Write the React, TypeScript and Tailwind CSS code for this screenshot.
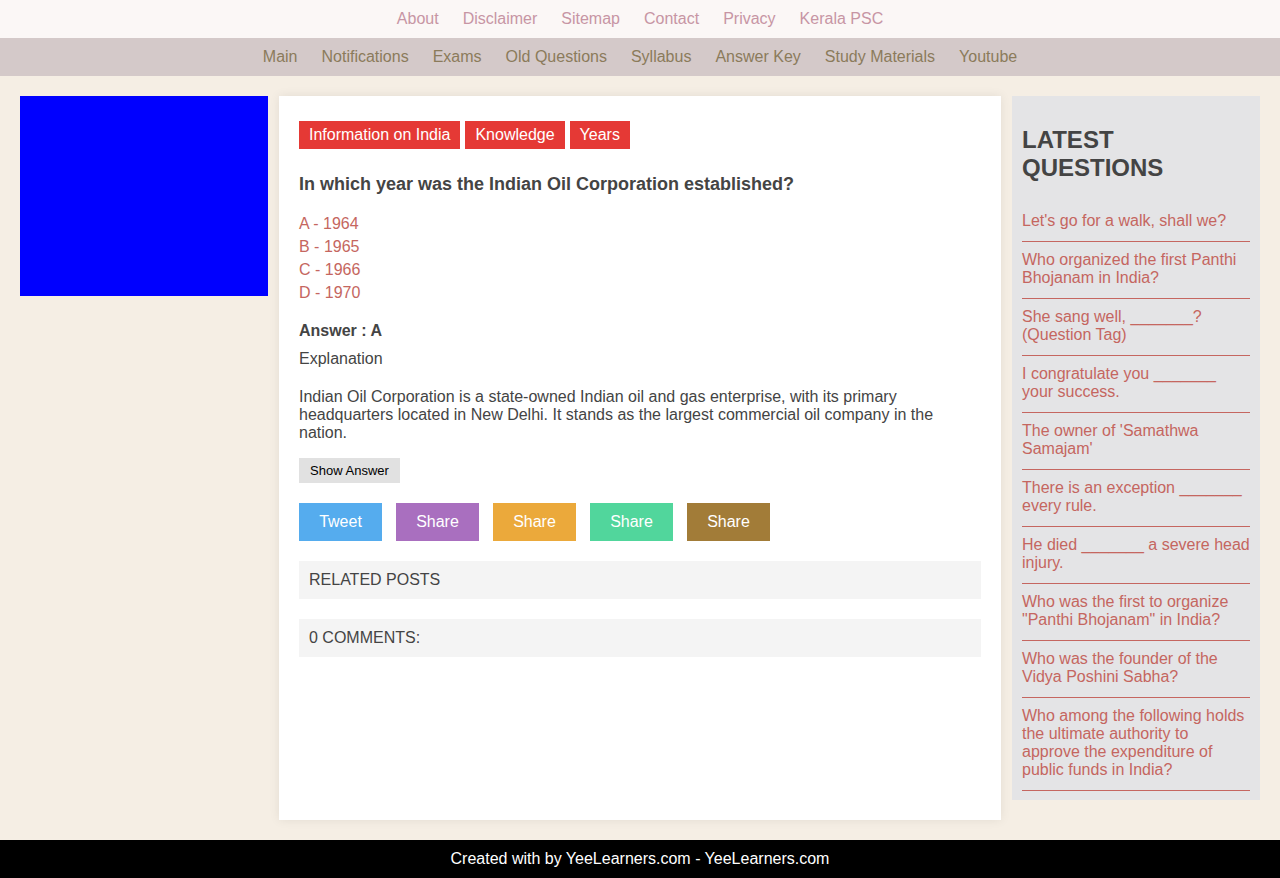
import React from "react";

const topLinks = ["About", "Disclaimer", "Sitemap", "Contact", "Privacy", "Kerala PSC"];
const navLinks = ["Main", "Notifications", "Exams", "Old Questions", "Syllabus", "Answer Key", "Study Materials", "Youtube"];
const latest = [
  "Let's go for a walk, shall we?",
  "Who organized the first Panthi Bhojanam in India?",
  "She sang well, _______? (Question Tag)",
  "I congratulate you _______ your success.",
  "The owner of 'Samathwa Samajam'",
  "There is an exception _______ every rule.",
  "He died _______ a severe head injury.",
  "Who was the first to organize \"Panthi Bhojanam\" in India?",
  "Who was the founder of the Vidya Poshini Sabha?",
  "Who among the following holds the ultimate authority to approve the expenditure of public funds in India?",
];
const shares = [
  { t: "Tweet", c: "bg-[#55acee]" },
  { t: "Share", c: "bg-[#a96fbf]" },
  { t: "Share", c: "bg-[#eba93b]" },
  { t: "Share", c: "bg-[#51d69c]" },
  { t: "Share", c: "bg-[#a27c38]" },
];

export default function App() {
  return (
    <div className="min-h-[878px] bg-[#f5eee4] font-['Liberation_Sans',Arial,sans-serif] text-[#444] text-[16px] flex flex-col">
      <div className="h-[38px] bg-[#fbf7f6] flex items-center justify-center">
        {topLinks.map((l) => (
          <a key={l} className="px-3 text-[#c795a4] leading-[18px]">{l}</a>
        ))}
      </div>
      <div className="h-[38px] bg-[#d4c9c9] flex items-center justify-center">
        {navLinks.map((l) => (
          <a key={l} className="px-3 text-[#8b7b5b] leading-[18px]">{l}</a>
        ))}
      </div>
      <div className="flex items-start gap-[11px] px-5 pt-5 pb-5">
        <div className="w-[248px] shrink-0">
          <div className="h-[200px] bg-[#0000ff]" />
        </div>
        <div className="w-[722px] shrink-0 bg-white shadow-[0_0_10px_rgba(0,0,0,0.08)] px-5 pt-[25px] pb-[163px]">
          <div className="flex gap-[5px]">
            {["Information on India", "Knowledge", "Years"].map((t) => (
              <span key={t} className="h-[28px] px-[10px] bg-[#e53935] text-white flex items-center leading-[18px]">{t}</span>
            ))}
          </div>
          <h1 className="mt-[24px] font-bold text-[18px] leading-[22px]">In which year was the Indian Oil Corporation established?</h1>
          <div className="mt-[17px] text-[#c56660] leading-[23px]">
            <div>A - 1964</div>
            <div>B - 1965</div>
            <div>C - 1966</div>
            <div>D - 1970</div>
          </div>
          <div className="mt-[18px] font-bold leading-[18px]">Answer : A</div>
          <div className="mt-[10px] leading-[18px]">Explanation</div>
          <p className="mt-[20px] leading-[18px]">
            Indian Oil Corporation is a state-owned Indian oil and gas enterprise, with its primary headquarters located in New Delhi. It stands as the largest commercial oil company in the nation.
          </p>
          <button className="mt-[16px] h-[25px] w-[101px] bg-[#e1e1e1] text-black text-[13px] flex items-center justify-center">Show Answer</button>
          <div className="mt-[20px] flex gap-[14px]">
            {shares.map((s, i) => (
              <span key={i} className={`w-[83px] h-[38px] flex items-center justify-center text-white ${s.c}`}>{s.t}</span>
            ))}
          </div>
          <div className="mt-[20px] h-[38px] bg-[#f4f4f4] px-[10px] flex items-center">RELATED POSTS</div>
          <div className="mt-[20px] h-[38px] bg-[#f4f4f4] px-[10px] flex items-center">0 COMMENTS:</div>
        </div>
        <div className="w-[248px] shrink-0 bg-[#e4e4e6] px-[10px] pt-[10px] pb-[9px]">
          <h2 className="mt-[20px] mb-[21px] font-bold text-[24px] leading-[28px] text-[#444]">LATEST QUESTIONS</h2>
          {latest.map((q, i) => (
            <div key={i} className="pt-[9px] pb-[11px] border-b border-[#c56660] text-[#c56660] leading-[18px]">{q}</div>
          ))}
        </div>
      </div>
      <div className="mt-auto h-[38px] bg-black text-white flex items-center justify-center">
        Created with by YeeLearners.com - YeeLearners.com
      </div>
    </div>
  );
}
